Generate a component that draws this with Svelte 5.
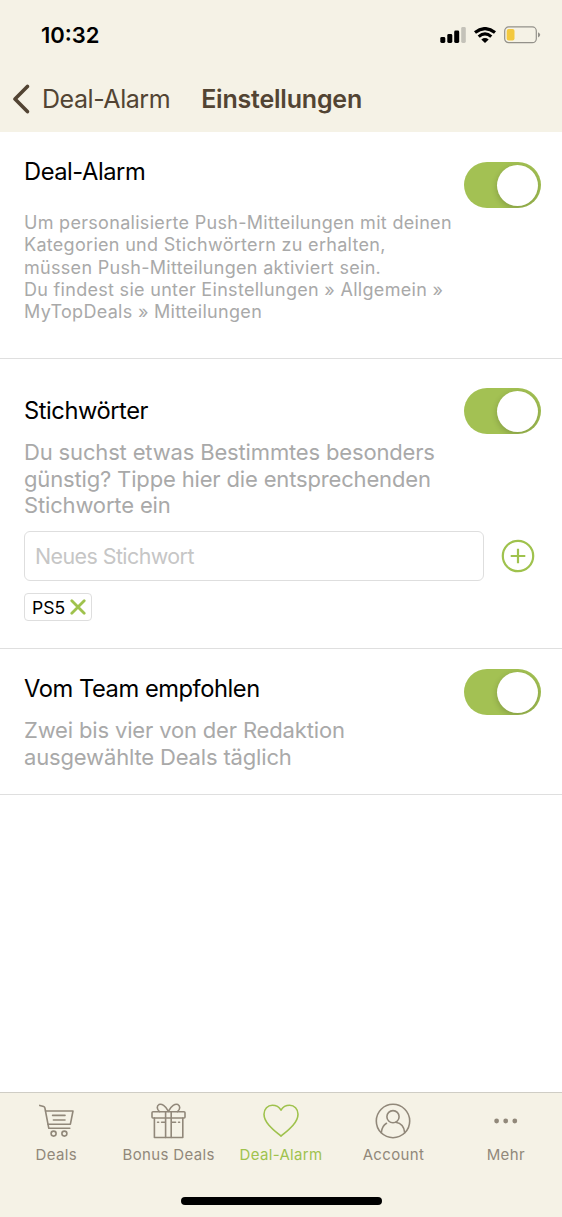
<script>
  let alarm = $state(true);
  let keywordsOn = $state(true);
  let team = $state(true);

  let keywords = $state(['PS5']);
  let draft = $state('');

  let active = $state('Deal-Alarm');
  const tabs = ['Deals', 'Bonus Deals', 'Deal-Alarm', 'Account', 'Mehr'];

  function add() {
    const word = draft.trim();
    if (word && !keywords.includes(word)) keywords.push(word);
    draft = '';
  }

  function remove(word) {
    keywords = keywords.filter((k) => k !== word);
  }
</script>

{#snippet toggle(on, label, flip)}
  <button class="toggle" class:on role="switch" aria-checked={on} aria-label={label} onclick={flip}>
    <span class="knob"></span>
  </button>
{/snippet}

<div class="screen">
  <header>
    <div class="status">
      <span class="time">10:32</span>
      <div class="status-icons">
        <svg width="26" height="16" viewBox="0 0 26 16">
          <rect x="0.3" y="10" width="5" height="6" rx="1.4" />
          <rect x="7.3" y="7" width="5" height="9" rx="1.4" />
          <rect x="14.2" y="3.6" width="5" height="12.4" rx="1.4" />
          <rect x="21.2" y="0" width="4.6" height="16" rx="1.4" fill="#c4c2b9" />
        </svg>
        <svg class="wifi" width="22" height="16" viewBox="0 0 22 16">
          <g fill="none" stroke="#000" stroke-width="3.2">
            <path d="M1 5.6 Q11 -2.4 21 5.6" />
            <path d="M4.7 9.6 Q11 4.2 17.3 9.6" />
          </g>
          <path d="M7.3 12.4 Q11 9.6 14.7 12.4 L11 16 Z" />
        </svg>
        <svg class="battery" width="37" height="18" viewBox="0 0 37 18">
          <rect x="0.7" y="0.9" width="31.6" height="15.8" rx="4" fill="none" stroke="#93918a" stroke-width="1.2" />
          <rect x="2.7" y="3" width="7.8" height="11.6" rx="2" fill="#f3c93f" />
          <path d="M34 6.2 Q36.2 7.2 36.2 8.8 T34 11.4 Z" fill="#93918a" />
        </svg>
      </div>
    </div>
    <nav class="navbar">
      <button class="back">
        <svg width="18" height="30" viewBox="0 0 18 30">
          <path d="M15.4 2.4 L3 15 L15.4 27.6" fill="none" stroke="#524433" stroke-width="3.6" stroke-linecap="round" stroke-linejoin="round" />
        </svg>
        <span>Deal-Alarm</span>
      </button>
      <h1>Einstellungen</h1>
    </nav>
  </header>

  <main>
    <section class="alarm">
      <div class="text">
        <h2>Deal-Alarm</h2>
        <p class="small">
          Um personalisierte Push-Mitteilungen mit deinen<br />
          Kategorien und Stichwörtern zu erhalten,<br />
          müssen Push-Mitteilungen aktiviert sein.<br />
          Du findest sie unter Einstellungen » Allgemein »<br />
          MyTopDeals » Mitteilungen
        </p>
      </div>
      {@render toggle(alarm, 'Deal-Alarm', () => (alarm = !alarm))}
    </section>

    <section class="keywords">
      <div class="text">
        <h2>Stichwörter</h2>
        <p>
          Du suchst etwas Bestimmtes besonders<br />
          günstig? Tippe hier die entsprechenden<br />
          Stichworte ein
        </p>
        <div class="entry">
          <input placeholder="Neues Stichwort" bind:value={draft} />
          <button class="add" aria-label="Hinzufügen" onclick={add}>
            <svg width="34" height="34" viewBox="0 0 34 34" fill="none" stroke="#9fc24d" stroke-width="2.2">
              <circle cx="17" cy="17" r="15.2" />
              <path d="M17 9.7 V24.3 M9.7 17 H24.3" />
            </svg>
          </button>
        </div>
        <div class="chips">
          {#each keywords as word (word)}
            <span class="chip">
              {word}
              <button aria-label="Entfernen" onclick={() => remove(word)}>
                <svg width="16" height="16" viewBox="0 0 16 16">
                  <path d="M1.8 1.8 L14.2 14.2 M14.2 1.8 L1.8 14.2" stroke="#9fc24d" stroke-width="2.8" stroke-linecap="round" />
                </svg>
              </button>
            </span>
          {/each}
        </div>
      </div>
      {@render toggle(keywordsOn, 'Stichwörter', () => (keywordsOn = !keywordsOn))}
    </section>

    <section class="team">
      <div class="text">
        <h2>Vom Team empfohlen</h2>
        <p>
          Zwei bis vier von der Redaktion<br />
          ausgewählte Deals täglich
        </p>
      </div>
      {@render toggle(team, 'Vom Team empfohlen', () => (team = !team))}
    </section>
  </main>

  <footer>
    <div class="tabs">
      {#each tabs as tab}
        <button class="tab" class:active={tab === active} onclick={() => (active = tab)}>
          <svg width="36" height="36" viewBox="0 0 36 36" fill="none" stroke="currentColor" stroke-width="1.6" stroke-linecap="round" stroke-linejoin="round">
            {#if tab === 'Deals'}
              <path d="M1.8 2.4 L5.6 3.6 Q6.6 4 6.9 5 L10.8 25.3 H31.8" />
              <path d="M7.6 8 H35 L32.4 21.2 H10" />
              <path d="M14.6 12.4 H27 M15.4 17 H27" />
              <circle cx="15.6" cy="30.6" r="2.5" />
              <circle cx="26.4" cy="30.6" r="2.5" />
            {:else if tab === 'Bonus Deals'}
              <rect x="1" y="8.7" width="33" height="6.3" rx="1" />
              <path d="M3.4 15 V34.5 H31.8 V15" />
              <path d="M14.6 8.7 V34.5 M20.2 8.7 V34.5" />
              <path d="M17.4 8.4 C14.6 2.5 10.6 0.5 7.9 1.6 C5.4 3 6 7 8.6 8.6 M17.4 8.4 C20.2 2.5 24.2 0.5 27 1.6 C29.6 3 29 7 26.4 8.6" />
              <path d="M6.6 19.3 H7.6 M10.6 19.3 H14.1 M21 19.3 H24.6 M27.6 19.3 H28.6" />
            {:else if tab === 'Deal-Alarm'}
              <path d="M18 33.2 C12.5 28.4 1 20.4 1 11.2 C1 5.8 4.8 2.3 9.3 2.3 C13.2 2.3 16.3 4.2 18 7.2 C19.7 4.2 22.8 2.3 26.7 2.3 C31.2 2.3 35 5.8 35 11.2 C35 20.4 23.5 28.4 18 33.2 Z" />
            {:else if tab === 'Account'}
              <circle cx="18" cy="18" r="16.7" />
              <circle cx="18" cy="13.7" r="6.1" />
              <path d="M6.3 29.8 C6.7 25.4 8.6 22 11.5 20.3 M20.7 19.2 C25.8 20 29.3 24 29.7 29.8" />
            {:else}
              <g fill="currentColor" stroke="none">
                <circle cx="8.6" cy="18" r="2.4" />
                <circle cx="17.7" cy="18" r="2.4" />
                <circle cx="26.8" cy="18" r="2.4" />
              </g>
            {/if}
          </svg>
          <span>{tab}</span>
        </button>
      {/each}
    </div>
    <div class="home"></div>
  </footer>
</div>

<style>
  :global(body) {
    margin: 0;
    background: #fff;
  }

  .screen {
    width: 562px;
    height: 1217px;
    display: flex;
    flex-direction: column;
    background: #fff;
    color: #000;
    font-family: Inter, 'Liberation Sans', sans-serif;
    overflow: hidden;
  }

  button {
    padding: 0;
    border: 0;
    background: none;
    color: inherit;
    font: inherit;
  }

  svg {
    display: block;
    flex: none;
  }

  h1,
  h2,
  p {
    margin: 0;
    white-space: nowrap;
  }

  header {
    height: 132px;
    flex: none;
    background: #f5f2e6;
  }

  .status {
    height: 69px;
    padding: 0 21px 0 41px;
    display: flex;
    justify-content: space-between;
    align-items: center;
  }

  .time {
    font-size: 22px;
    font-weight: 600;
  }

  .status-icons {
    display: flex;
    align-items: center;
  }

  .wifi {
    margin: 0 8px;
  }

  .navbar {
    height: 60px;
    padding-left: 12px;
    display: flex;
    align-items: center;
    color: #524433;
  }

  .back {
    display: flex;
    align-items: center;
    gap: 12px;
    font-size: 25px;
    letter-spacing: -0.45px;
  }

  h1 {
    margin-left: 31px;
    font-size: 25px;
    font-weight: 600;
    letter-spacing: -0.2px;
  }

  section {
    box-sizing: border-box;
    padding: 0 21px 0 24px;
    display: flex;
    justify-content: space-between;
    border-bottom: 1px solid #dfdfdf;
  }

  .alarm {
    height: 227px;
    padding-top: 30px;
  }

  .alarm .text {
    margin-top: -5px;
  }

  .keywords {
    height: 290px;
    padding-top: 29px;
  }

  .keywords .text {
    margin-top: 8px;
  }

  .team {
    height: 146px;
    padding-top: 20px;
  }

  .team .text {
    margin-top: 5px;
  }

  .text {
    width: 0;
  }

  h2 {
    font-size: 23.7px;
    font-weight: 400;
    line-height: 30px;
    letter-spacing: -0.45px;
  }

  p {
    margin-top: 13px;
    font-size: 22px;
    line-height: 26.7px;
    letter-spacing: -0.16px;
    color: #a9a9a9;
  }

  p.small {
    margin-top: 25px;
    font-size: 18px;
    line-height: 22.3px;
    letter-spacing: 0.3px;
  }

  .toggle {
    width: 77px;
    height: 46px;
    padding: 0 3px;
    box-sizing: border-box;
    display: flex;
    flex: none;
    align-items: center;
    border-radius: 23px;
    background: #ddd;
    overflow: hidden;
  }

  .toggle.on {
    justify-content: flex-end;
    background: #a3c153;
  }

  .knob {
    width: 41px;
    height: 41px;
    border-radius: 50%;
    background: #fff;
    box-shadow: 0 2px 6px rgba(0, 0, 0, 0.2);
  }

  .entry {
    width: 512px;
    margin-top: 12px;
    display: flex;
    align-items: center;
    gap: 17px;
  }

  input {
    width: 460px;
    height: 50px;
    box-sizing: border-box;
    padding: 0 10px;
    border: 1px solid #dedede;
    border-radius: 6px;
    background: #fff;
    font: 21.4px Inter, 'Liberation Sans', sans-serif;
    letter-spacing: -0.55px;
    outline: none;
  }

  input::placeholder {
    color: #c6c6c6;
    opacity: 1;
  }

  .chips {
    margin-top: 12px;
    display: flex;
    gap: 8px;
  }

  .chip {
    height: 28px;
    box-sizing: border-box;
    padding: 0 5px 0 7px;
    display: flex;
    align-items: center;
    gap: 5px;
    border: 1px solid #dedede;
    border-radius: 4px;
    font-size: 17.6px;
  }

  footer {
    height: 125px;
    margin-top: auto;
    box-sizing: border-box;
    flex: none;
    border-top: 1px solid #cfcdc5;
    background: #f5f2e6;
  }

  .tabs {
    height: 104px;
    display: flex;
  }

  .tab {
    flex: 1 1 0;
    padding-top: 10px;
    display: flex;
    flex-direction: column;
    align-items: center;
    gap: 6px;
    color: #91887a;
    font-size: 15px;
    line-height: 20px;
    letter-spacing: 0.35px;
    white-space: nowrap;
  }

  .tab.active {
    color: #9fc24d;
  }

  .home {
    width: 201px;
    height: 8px;
    margin: 0 auto;
    border-radius: 4px;
    background: #000;
  }
</style>
